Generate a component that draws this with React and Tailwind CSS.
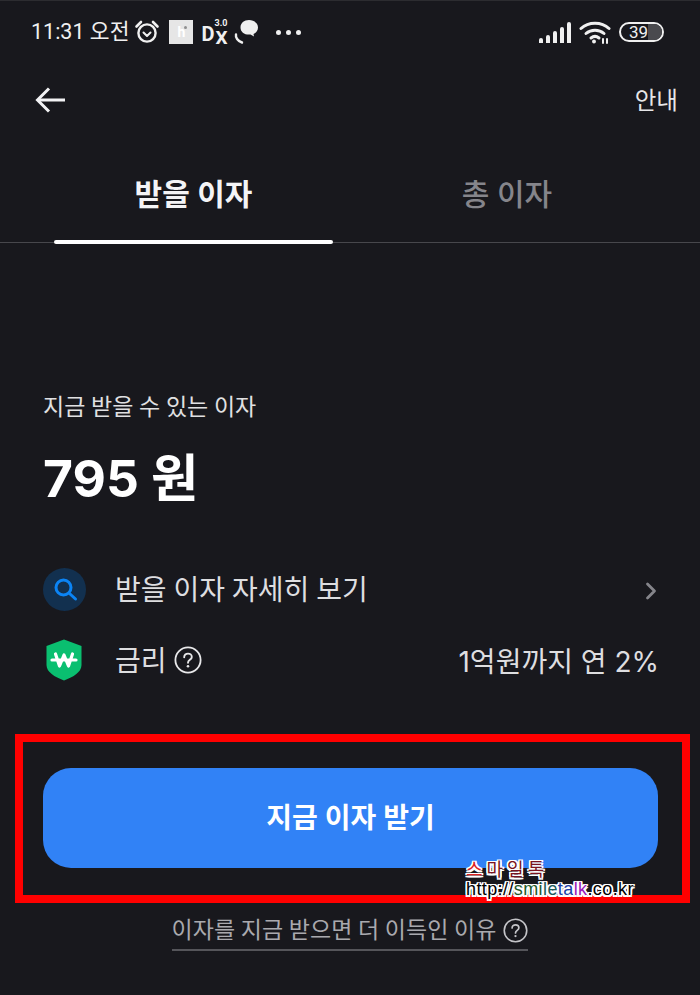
import { ChevronRight } from "lucide-react";

const font = { fontFamily: '"Roboto", "Noto Sans CJK KR", sans-serif' };
const numFont = { fontFamily: '"Inter", "Noto Sans CJK KR", sans-serif' };

function HelpIcon({ size = 28, color = "#e8e8ea" }) {
  return (
    <svg width={size} height={size} viewBox="0 0 28 28" fill="none">
      <circle cx="14" cy="14" r="12.6" stroke={color} strokeWidth="1.8" />
      <path d="M10.2 11.2c0-2.2 1.7-3.6 3.8-3.6s3.8 1.4 3.8 3.3c0 2.9-3.8 3-3.8 5.8" stroke={color} strokeWidth="1.9" strokeLinecap="round" />
      <circle cx="14" cy="20.2" r="1.3" fill={color} />
    </svg>
  );
}

function StatusBar() {
  return (
    <div className="h-[60px] border-t border-[#2c2c30] flex items-center justify-between pt-[3px] pl-[31px] pr-[36px] text-[#f0f0f0]">
      <div className="flex items-center">
        <span className="text-[21.500px] leading-none mr-[5px] whitespace-nowrap">11:31 오전</span>
        <svg width="26" height="26" viewBox="0 0 26 26" fill="none" stroke="#f0f0f0" className="mr-[9px]">
          <circle cx="13" cy="14" r="8.6" strokeWidth="2.4" />
          <path d="M2.5 7.5 7 3M23.5 7.5 19 3" strokeWidth="2.6" strokeLinecap="round" />
          <path d="M9.5 13.5 13 17l3.5-3.5" strokeWidth="2" strokeLinecap="round" strokeLinejoin="round" />
        </svg>
        <div className="relative w-[24px] h-[24px] bg-[#e6e6e6] mr-[8px] flex items-center justify-center">
          <span className="text-[14px] leading-none text-white font-bold">h</span>
          <span className="absolute top-[6px] right-[6px] w-[3px] h-[3px] rounded-full bg-[#8f8f8f]" />
        </div>
        <div className="relative w-[26px] h-[26px] mr-[7px]">
          <span className="absolute left-0 top-[5px] text-[20px] leading-none font-bold">D</span>
          <span className="absolute right-0 top-[9px] text-[19px] leading-none font-bold">X</span>
          <span className="absolute right-0 top-0 text-[9px] leading-none font-bold">3.0</span>
        </div>
        <svg width="26" height="26" viewBox="0 0 26 26" fill="none" className="mr-[16px]">
          <path d="M15 1c5 0 9 3.200 9 7.400 0 3-2 5.400-4.500 6.600l.5 2.500-3.500-2c-.5.100-1 .100-1.500.100-5 0-8.500-3-8.500-7.200S10 1 15 1Z" fill="#f0f0f0" />
          <path d="M2 15.500c-.6 2.800 1.500 6.500 6 8" stroke="#f0f0f0" strokeWidth="2.400" strokeLinecap="round" />
        </svg>
        <div className="flex gap-[5px]">
          <span className="w-[5px] h-[5px] rounded-full bg-[#f0f0f0]" />
          <span className="w-[5px] h-[5px] rounded-full bg-[#f0f0f0]" />
          <span className="w-[5px] h-[5px] rounded-full bg-[#f0f0f0]" />
        </div>
      </div>
      <div className="flex items-center">
        <div className="flex items-end gap-[2.500px] h-[21px] mr-[8px]">
          <span className="w-[4.500px] h-[5px] rounded-t-[2px] bg-[#f0f0f0]" />
          <span className="w-[4.500px] h-[8px] rounded-t-[2px] bg-[#f0f0f0]" />
          <span className="w-[4.500px] h-[12px] rounded-t-[2px] bg-[#f0f0f0]" />
          <span className="w-[4.500px] h-[16px] rounded-t-[2px] bg-[#f0f0f0]" />
          <span className="w-[4.500px] h-[21px] rounded-t-[2px] bg-[#f0f0f0]" />
        </div>
        <svg width="32" height="24" viewBox="0 0 32 24" fill="none" stroke="#f0f0f0" strokeWidth="3" strokeLinecap="round" className="mr-[8px]">
          <path d="M2 8.500C9.500 1.500 22.500 1.500 30 8.500" />
          <path d="M7 13.500c5-4.500 13-4.500 18 0" />
          <path d="M12 18c2.500-2 5.500-2 8 0" />
          <circle cx="15" cy="21.500" r="1.200" fill="#f0f0f0" strokeWidth="1.500" />
          <path d="M24 19v4M28 19v4" strokeWidth="2" />
        </svg>
        <div className="relative w-[45px] h-[20px] rounded-full border-2 border-[#f0f0f0] overflow-hidden flex items-center justify-center">
          <span className="absolute right-0 top-0 bottom-0 w-[14px] bg-[#4a4a4e]" />
          <span className="relative text-[17px] leading-none pr-[6px]" style={{ fontFamily: '"Roboto", sans-serif' }}>39</span>
        </div>
      </div>
    </div>
  );
}

function Header() {
  return (
    <div className="h-[80px] flex items-center justify-between pl-[34px] pr-[22px]">
      <svg width="32" height="32" viewBox="0 0 32 32" fill="none" stroke="#f2f2f4" strokeWidth="3">
        <path d="M31 16H4" />
        <path d="M15 4.500 3.500 16 15 27.500" />
      </svg>
      <span className="text-[23.500px] leading-none text-[#e6e6e8] pt-[3px]">안내</span>
    </div>
  );
}

function Tabs() {
  return (
    <div className="h-[103px] border-b border-[#47474c] grid grid-cols-2 pl-[54px] pr-[8px]">
      <div className="relative flex items-start justify-center w-[279px] pt-[37px]">
        <span className="text-[30px] leading-[36px] font-bold text-[#f4f4f6]">받을 이자</span>
        <span className="absolute left-0 right-0 bottom-[-2px] h-[4px] rounded-full bg-white" />
      </div>
      <div className="flex items-start justify-center pt-[37px] pr-[51px]">
        <span className="text-[30px] leading-[36px] font-medium text-[#85858b]">총 이자</span>
      </div>
    </div>
  );
}

function Rows() {
  return (
    <div className="mt-[59px] px-[43px] flex flex-col gap-[27px]">
      <div className="h-[44px] flex items-center">
        <div className="w-[43px] h-[43px] rounded-full bg-[#12304f] flex items-center justify-center mr-[29px]">
          <svg width="26" height="26" viewBox="0 0 26 26" fill="none" stroke="#0b84f5" strokeWidth="3" strokeLinecap="round">
            <circle cx="11.500" cy="11.500" r="7.500" />
            <path d="m17.500 17.500 6 5.500" />
          </svg>
        </div>
        <span className="text-[28px] leading-none text-[#dedee0] flex-1 pt-[3px]">받을 이자 자세히 보기</span>
        <ChevronRight size={28} strokeWidth={2.400} color="#85858b" className="mr-[-8px] mt-[3px]" />
      </div>
      <div className="h-[44px] flex items-center">
        <svg width="36" height="42" viewBox="0 0 36 42" className="ml-[3px] mr-[33px]">
          <path d="M18 .500 35.500 7v19c0 7-8 12-17.500 15.500C8.500 38 .500 33 .500 26V7Z" fill="#0abf70" />
          <path d="M6 21h24M9.500 15l4 12 4.500-11 4.500 11 4-12" fill="none" stroke="#fff" strokeWidth="3.200" strokeLinecap="round" strokeLinejoin="round" />
        </svg>
        <span className="text-[28px] leading-none text-[#dedee0] mr-[7px] pt-[3px]">금리</span>
        <HelpIcon />
        <span className="ml-auto mr-[-2px] pt-[3px] text-[28px] leading-none text-[#dedee0]" style={numFont}>1억원까지 연 2%</span>
      </div>
    </div>
  );
}

function Watermark() {
  const outline = { textShadow: "1.500px 0 #fff, -1.500px 0 #fff, 0 1.500px #fff, 0 -1.500px #fff, 1.500px 1.500px #fff, -1.500px -1.500px #fff, 1.500px -1.500px #fff, -1.500px 1.500px #fff" };
  return (
    <div className="absolute left-[466px] top-[860px]" style={outline}>
      <div className="text-[18px] leading-[20px] tracking-[4px] text-[#7a1420]">
        <span className="text-[#e02020]">스</span>마일톡
      </div>
      <div className="text-[18px] leading-[19px] tracking-[0.400px] text-black" style={{ fontFamily: '"Liberation Sans", sans-serif', ...outline }}>
        http://<span className="text-[#1f5a2a]">smi</span><span className="text-[#1c5a5a]">le</span><span className="text-[#1a3fa8]">ta</span><span className="text-[#9a18b8]">lk</span>.co.kr
      </div>
    </div>
  );
}

export default function App() {
  return (
    <div className="relative w-[700px] h-[995px] bg-[#18181d] overflow-hidden" style={font}>
      <StatusBar />
      <Header />
      <Tabs />
      <div className="mt-[150px] px-[43px] text-[23px] leading-[30px] text-[#e0e0e2]">지금 받을 수 있는 이자</div>
      <div className="mt-[25px] px-[43px] text-[51.500px] leading-[60px] font-bold text-white" style={numFont}>795 원</div>
      <Rows />
      <div className="mt-[52px] ml-[15px] mr-[10px] h-[169px] border-[8px] border-[#ff0000] pl-[20px] pr-[24px] pt-[26px]">
        <button className="w-full h-[100px] rounded-[28px] bg-[#3182f6] text-white text-[28px] font-bold pt-[2px]">지금 이자 받기</button>
      </div>
      <div className="mt-[9px] flex justify-center">
        <div className="flex items-center gap-[7px] h-[39px] border-b-2 border-[#55555a] text-[23px] leading-none text-[#a9a9ae]">
          이자를 지금 받으면 더 이득인 이유
          <HelpIcon size={25} color="#c4c4c8" />
        </div>
      </div>
      <Watermark />
    </div>
  );
}
